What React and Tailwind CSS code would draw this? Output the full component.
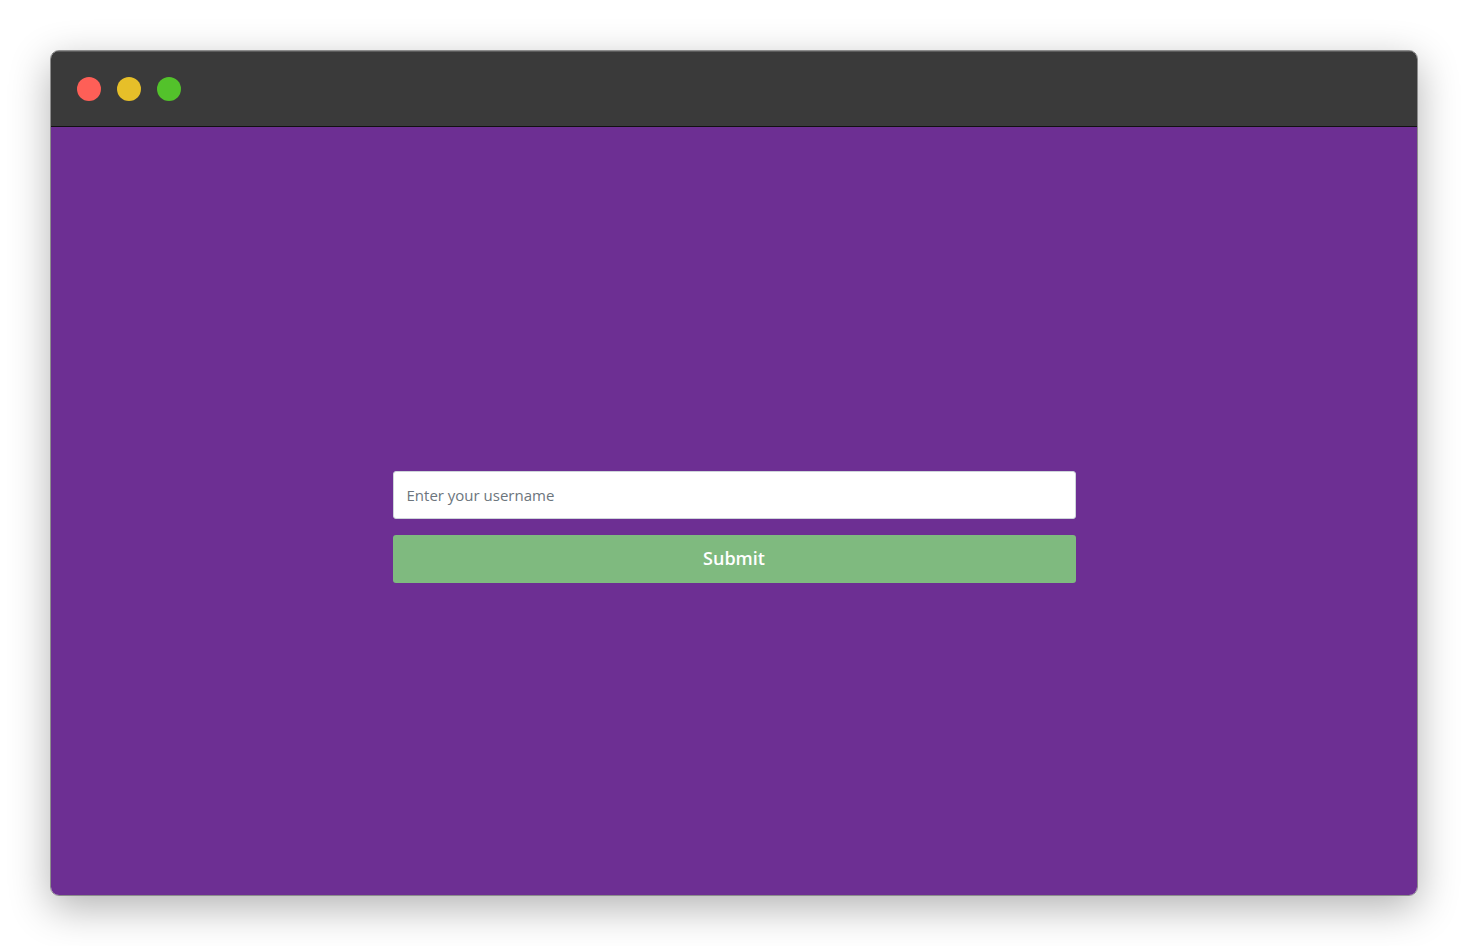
import React from "react";

const Dot = ({ color }) => (
  <span className={`block h-6 w-6 rounded-full ${color}`} />
);

const App = () => {
  return (
    <div className="min-h-screen w-full bg-white pt-[50px] pl-[50px]" style={{ fontFamily: '"Open Sans", "Noto Sans", sans-serif' }}>
      <div className="w-[1368px] h-[846px] rounded-[9px] border border-[#8c8c8c] overflow-hidden flex flex-col shadow-[0_12px_40px_rgba(0,0,0,0.3)]">
        {/* title bar */}
        <div className="h-[76px] shrink-0 flex items-center gap-4 pl-[26px] bg-[#3a3a3a] border-t border-t-[#5c5c5c] border-b border-b-[#111]">
          <Dot color="bg-[#fe5f57]" />
          <Dot color="bg-[#e6bf29]" />
          <Dot color="bg-[#53c22b]" />
        </div>

        {/* page */}
        <div className="flex-1 bg-[#6d2f93] flex flex-col items-center justify-center pt-[31px]">
          <form className="w-[683px] flex flex-col gap-4" onSubmit={(e) => e.preventDefault()}>
            <input
              type="text"
              placeholder="Enter your username"
              className="h-12 w-full rounded-[3px] bg-white px-[13px] text-[15px] text-[#495057] placeholder:text-[#6c757d] border border-[#ced4da] outline-none"
            />
            <button
              type="submit"
              className="h-12 w-full rounded-[3px] bg-[#7fba7f] text-white text-[18px] font-semibold"
            >
              Submit
            </button>
          </form>
        </div>
      </div>
    </div>
  );
};

export default App;
